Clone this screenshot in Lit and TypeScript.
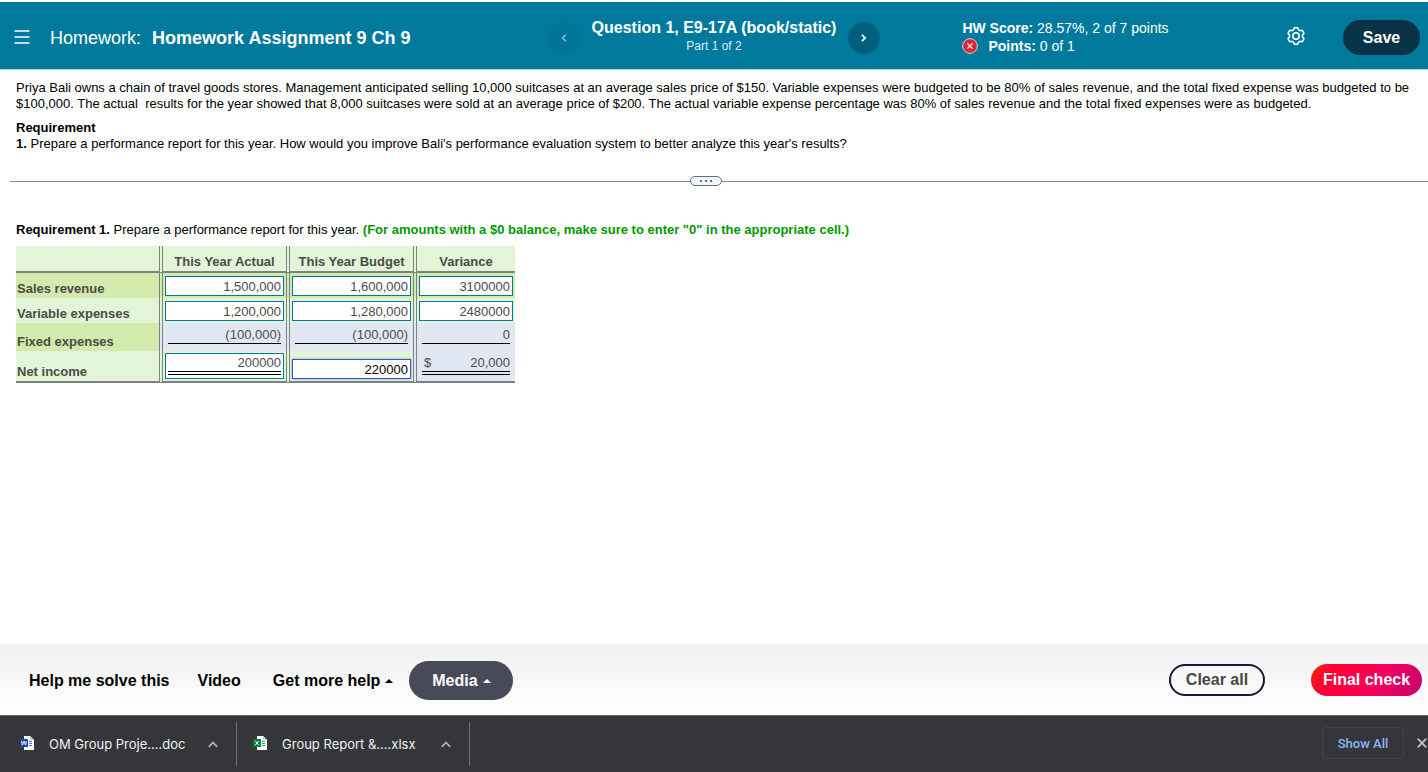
import { LitElement, html, css, svg, nothing } from "lit";
import { customElement, property } from "lit/decorators.js";
import { classMap } from "lit/directives/class-map.js";

type Kind = "input" | "ruled-input" | "active-input" | "subtotal" | "total";

interface Cell {
  kind: Kind;
  value: string;
  currency?: string;
}

interface Row {
  label: string;
  size: "short" | "medium" | "tall";
  dark: boolean;
  cells: Cell[];
}

const COLUMNS = ["This Year Actual", "This Year Budget", "Variance"];

const ROWS: Row[] = [
  {
    label: "Sales revenue",
    size: "short",
    dark: true,
    cells: [
      { kind: "input", value: "1,500,000" },
      { kind: "input", value: "1,600,000" },
      { kind: "input", value: "3100000" },
    ],
  },
  {
    label: "Variable expenses",
    size: "short",
    dark: false,
    cells: [
      { kind: "input", value: "1,200,000" },
      { kind: "input", value: "1,280,000" },
      { kind: "input", value: "2480000" },
    ],
  },
  {
    label: "Fixed expenses",
    size: "medium",
    dark: true,
    cells: [
      { kind: "subtotal", value: "(100,000)" },
      { kind: "subtotal", value: "(100,000)" },
      { kind: "subtotal", value: "0" },
    ],
  },
  {
    label: "Net income",
    size: "tall",
    dark: false,
    cells: [
      { kind: "ruled-input", value: "200000" },
      { kind: "active-input", value: "220000" },
      { kind: "total", value: "20,000", currency: "$" },
    ],
  },
];

const base = css`
  :host,
  * {
    box-sizing: border-box;
  }
  button,
  input {
    font-family: inherit;
    margin: 0;
  }
  button {
    border: 0;
    padding: 0;
    background: none;
    color: inherit;
    display: flex;
    align-items: center;
    justify-content: center;
    white-space: nowrap;
  }
  svg {
    display: block;
    flex: none;
  }
`;

@customElement("homework-header")
export class HomeworkHeader extends LitElement {
  static styles = [
    base,
    css`
      :host {
        display: block;
        flex: none;
      }
      .bar {
        display: grid;
        grid-template-columns: 1fr auto 1fr;
        align-items: center;
        height: 68px;
        background: #007a9c;
        border-bottom: 1px solid #b5d5e2;
        color: #fff;
      }
      .left {
        display: flex;
        align-items: center;
        gap: 20px;
        padding: 4px 0 0 14px;
      }
      .menu {
        padding-bottom: 2px;
      }
      h1 {
        margin: 0;
        font-size: 18px;
        line-height: 24px;
        font-weight: 400;
        white-space: nowrap;
      }
      h1 b {
        margin-left: 6px;
      }
      .nav {
        display: flex;
        align-items: center;
        gap: 12px;
        padding-top: 4px;
      }
      .round {
        width: 32px;
        height: 32px;
        border-radius: 16px;
        background: #005f7f;
      }
      .round.off {
        background: #007497;
        color: #8cc0d1;
      }
      .title {
        text-align: center;
        white-space: nowrap;
        padding-bottom: 4px;
      }
      .question {
        font-size: 16px;
        line-height: 20px;
        font-weight: 700;
      }
      .part {
        font-size: 12px;
        line-height: 16px;
        color: #d9ecf2;
      }
      .right {
        display: flex;
        align-items: center;
        padding: 4px 8px 0 82px;
      }
      .score {
        font-size: 14px;
        line-height: 18px;
        white-space: nowrap;
        margin-right: auto;
        padding-bottom: 2px;
      }
      .points {
        display: flex;
        align-items: center;
        gap: 10px;
      }
      .settings {
        padding-bottom: 4px;
      }
      .save {
        width: 77px;
        height: 35px;
        margin-left: 37px;
        border-radius: 18px;
        background: #0b3347;
        font-size: 16px;
        font-weight: 700;
      }
    `,
  ];

  render() {
    return html`
      <header class="bar">
        <div class="left">
          <button class="menu" aria-label="Menu">
            <svg width="16" height="14" viewBox="0 0 16 14" stroke="#fff" stroke-width="1.5">
              <path d="M.5 1h15M.5 7h15M.5 13h15" />
            </svg>
          </button>
          <h1>Homework: <b>Homework Assignment 9 Ch 9</b></h1>
        </div>
        <nav class="nav">
          <button class="round off" aria-label="Previous question">
            <svg width="6" height="8" viewBox="0 0 6 8" fill="none" stroke="currentColor" stroke-width="1.5">
              <path d="M4.8.8 1.500 4l3.300 3.200" />
            </svg>
          </button>
          <div class="title">
            <div class="question">Question 1, E9-17A (book/static)</div>
            <div class="part">Part 1 of 2</div>
          </div>
          <button class="round" aria-label="Next question">
            <svg width="6" height="8" viewBox="0 0 6 8" fill="none" stroke="currentColor" stroke-width="1.8">
              <path d="m1 .8 3.2 3.2L1 7.2" />
            </svg>
          </button>
        </nav>
        <div class="right">
          <div class="score">
            <div><b>HW Score:</b> 28.57%, 2 of 7 points</div>
            <div class="points">
              <svg width="16" height="16" viewBox="0 0 16 16">
                <circle cx="8" cy="8" r="7.3" fill="#db2437" stroke="#e9c9d0" stroke-width="1" />
                <path d="m5.4 5.4 5.2 5.2m0-5.2-5.2 5.2" stroke="#fff" stroke-width="1.3" />
              </svg>
              <span><b>Points:</b> 0 of 1</span>
            </div>
          </div>
          <button class="settings" aria-label="Settings">
            <svg width="20" height="20" viewBox="0 0 20 20" fill="none" stroke="#fff" stroke-width="1.5" stroke-linejoin="round">
              <path
                d="M8.300 1.700h3.400l.8 2.100 1.500.9 2.300-.4 1.700 3-1.500 1.800v1.800l1.500 1.800-1.700 3-2.300-.4-1.500.9-.8 2.100H8.300l-.8-2.100-1.500-.9-2.300.4-1.700-3 1.500-1.800V9.100L2 7.300l1.700-3 2.300.4 1.500-.9z"
              />
              <circle cx="10" cy="10" r="3.200" />
            </svg>
          </button>
          <button class="save">Save</button>
        </div>
      </header>
    `;
  }
}

@customElement("performance-table")
export class PerformanceTable extends LitElement {
  static styles = [
    base,
    css`
      :host {
        display: block;
      }
      table {
        table-layout: fixed;
        width: 499px;
        border-collapse: separate;
        border-spacing: 0;
        font-size: 13px;
        line-height: 16px;
        color: #4b4b4b;
      }
      .c-label {
        width: 143px;
      }
      .c-wide {
        width: 127px;
      }
      .c-last {
        width: 102px;
      }
      th,
      td {
        padding: 0;
      }
      thead th {
        height: 27px;
        padding-top: 6px;
        background: #e3f5d8;
        border-bottom: 2px solid #808080;
      }
      thead th + th,
      tbody td {
        border-left: 4px double #808080;
      }
      tbody th {
        text-align: left;
        vertical-align: bottom;
        padding: 0 0 1px 1px;
      }
      tbody td {
        vertical-align: bottom;
        padding: 0 2px 2px;
      }
      .short {
        height: 25px;
      }
      .medium {
        height: 28px;
      }
      .tall {
        height: 32px;
      }
      .tall th,
      .tall td {
        border-bottom: 2px solid #808080;
      }
      tr {
        background: #e3f5d8;
      }
      tr.dark {
        background: #d2eaac;
      }
      td.fixed {
        background: #e2e7f4;
        vertical-align: top;
        padding: 4px 5px 0;
      }
      .amount {
        display: flex;
        justify-content: space-between;
        border-bottom: 1px solid #000;
      }
      .amount b {
        font-weight: 400;
        margin-left: auto;
      }
      .amount.double {
        border-bottom: 4px double #000;
      }
      .amount i {
        font-style: normal;
        margin-left: 2px;
      }
      input {
        display: block;
        width: 100%;
        height: 20px;
        padding: 0 2px;
        border: 1px solid #007a9c;
        border-radius: 0;
        outline: 0;
        background: #fff;
        color: inherit;
        font-size: 13px;
        text-align: right;
      }
      .active {
        border-color: #2f55c8;
        box-shadow: 0 0 2px #6d8fe0;
        color: #000;
      }
      .frame {
        height: 26px;
        padding: 0 2px;
        border: 1px solid #007a9c;
        background: #fff;
      }
      .frame input {
        height: 21px;
        padding: 0;
        border: 0;
        border-bottom: 4px double #000;
      }
    `,
  ];

  private renderCell(cell: Cell, label: string) {
    if (cell.kind === "subtotal" || cell.kind === "total") {
      return html`<td class="fixed">
        <div class=${classMap({ amount: true, double: cell.kind === "total" })}>
          ${cell.currency ? html`<i>${cell.currency}</i>` : nothing}<b>${cell.value}</b>
        </div>
      </td>`;
    }
    if (cell.kind === "ruled-input") {
      return html`<td>
        <div class="frame"><input type="text" aria-label=${label} .value=${cell.value} /></div>
      </td>`;
    }
    return html`<td>
      <input
        type="text"
        class=${classMap({ active: cell.kind === "active-input" })}
        aria-label=${label}
        .value=${cell.value}
      />
    </td>`;
  }

  render() {
    return html`
      <table>
        <colgroup>
          <col class="c-label" />
          <col class="c-wide" />
          <col class="c-wide" />
          <col class="c-last" />
        </colgroup>
        <thead>
          <tr>
            <th></th>
            ${COLUMNS.map((name) => html`<th scope="col">${name}</th>`)}
          </tr>
        </thead>
        <tbody>
          ${ROWS.map(
            (row) => html`<tr class=${classMap({ [row.size]: true, dark: row.dark })}>
              <th scope="row">${row.label}</th>
              ${row.cells.map((cell, i) => this.renderCell(cell, `${row.label}, ${COLUMNS[i]}`))}
            </tr>`
          )}
        </tbody>
      </table>
    `;
  }
}

@customElement("help-bar")
export class HelpBar extends LitElement {
  static styles = [
    base,
    css`
      :host {
        display: block;
        flex: none;
      }
      .bar {
        display: flex;
        align-items: center;
        height: 71px;
        padding: 2px 6px 0 29px;
        background: linear-gradient(#f0f0f0, #fff);
      }
      button {
        font-size: 16px;
        line-height: 20px;
        font-weight: 700;
        color: #000;
        gap: 5px;
      }
      .video {
        margin-left: 28px;
      }
      .more {
        margin-left: 32px;
      }
      button.media {
        width: 104px;
        height: 39px;
        margin-left: 16px;
        border-radius: 20px;
        background: #484b57;
        color: #fff;
      }
      .actions {
        display: flex;
        gap: 46px;
        margin-left: auto;
        padding-bottom: 2px;
      }
      button.clear {
        width: 96px;
        height: 32px;
        border: 2px solid #151b33;
        border-radius: 16px;
        color: #484848;
      }
      button.final {
        width: 111px;
        height: 32px;
        border-radius: 16px;
        background: linear-gradient(120deg, #ff2a00 0%, #ff0030 18%, #f5005c 60%, #c4006e 100%);
        color: #fff;
      }
    `,
  ];

  private caret() {
    return html`<svg width="8" height="4" viewBox="0 0 8 4" fill="currentColor">
      ${svg`<path d="M4 0 8 4H0z" />`}
    </svg>`;
  }

  render() {
    return html`
      <footer class="bar">
        <button>Help me solve this</button>
        <button class="video">Video</button>
        <button class="more">Get more help ${this.caret()}</button>
        <button class="media">Media ${this.caret()}</button>
        <div class="actions">
          <button class="clear">Clear all</button>
          <button class="final">Final check</button>
        </div>
      </footer>
    `;
  }
}

@customElement("download-item")
export class DownloadItem extends LitElement {
  @property() name = "";
  @property() kind: "word" | "excel" = "word";

  static styles = [
    base,
    css`
      :host {
        display: flex;
        align-items: center;
        width: 233px;
        height: 44px;
        padding: 0 18px 0 16px;
        border-right: 1px solid #707174;
      }
      .name {
        flex: 1;
        margin-left: 14px;
        font-family: Inter, "Liberation Sans", sans-serif;
        font-size: 13px;
        line-height: 16px;
        color: #f1f1f2;
        white-space: nowrap;
      }
    `,
  ];

  private icon() {
    const word = this.kind === "word";
    const main = word ? "#2446a0" : "#0c8043";
    const lines = word ? "#2f7fe0" : "#27a567";
    return html`<svg width="15" height="16" viewBox="0 0 15 16">
      <path d="M4 0h6l4 4v10H4z" fill="#fff" />
      <path d="M10 0v4h4z" fill="#c9ccd2" />
      <path d="M9 5.500h3M9 7.500h3M9 9.500h3" stroke=${lines} />
      <path d="M0 3h8v8H0z" fill=${main} />
      ${word
        ? svg`<path d="m1.500 5 1 4 1.500-4 1.500 4 1-4" fill="none" stroke="#fff" stroke-width=".9" />`
        : svg`<path d="m2.300 5 3.400 4m0-4-3.400 4" stroke="#fff" />`}
    </svg>`;
  }

  render() {
    return html`
      ${this.icon()}
      <span class="name">${this.name}</span>
      <button aria-label="More actions">
        <svg width="10" height="7" viewBox="0 0 10 7" fill="none" stroke="#b4b5b8" stroke-width="1.700">
          <path d="m.8 5.800 4.200-4.300 4.200 4.300" />
        </svg>
      </button>
    `;
  }
}

@customElement("download-shelf")
export class DownloadShelf extends LitElement {
  static styles = [
    base,
    css`
      :host {
        display: block;
        flex: none;
      }
      .shelf {
        display: flex;
        align-items: center;
        height: 57px;
        padding: 0 1px 0 4px;
        border-top: 1px solid #626569;
        background: #35363a;
      }
      .end {
        display: flex;
        align-items: center;
        gap: 13px;
        margin-left: auto;
        padding-bottom: 2px;
      }
      .show {
        width: 82px;
        height: 32px;
        border: 1px solid #424347;
        border-radius: 4px;
        font-family: Roboto, sans-serif;
        font-size: 13px;
        font-weight: 500;
        color: #8ab4f8;
      }
    `,
  ];

  render() {
    return html`
      <section class="shelf">
        <download-item kind="word" name="OM Group Proje....doc"></download-item>
        <download-item kind="excel" name="Group Report &....xlsx"></download-item>
        <div class="end">
          <button class="show">Show All</button>
          <button aria-label="Close">
            <svg width="10" height="10" viewBox="0 0 10 10" stroke="#c3c4c6" stroke-width="1.800">
              <path d="m.7.7 8.600 8.600m0-8.600L.7 9.300" />
            </svg>
          </button>
        </div>
      </section>
    `;
  }
}

@customElement("app-root")
export class AppRoot extends LitElement {
  static styles = [
    base,
    css`
      :host {
        display: flex;
        flex-direction: column;
        min-height: 100vh;
        padding-top: 2px;
        background: #fff;
        font-family: "Liberation Sans", Arial, sans-serif;
      }
      main {
        flex: 1;
        font-size: 13px;
        line-height: 16px;
        color: #000;
      }
      .problem {
        padding: 10px 16px 0;
      }
      p {
        margin: 0 0 8px;
      }
      .splitter {
        display: flex;
        align-items: center;
        margin: 24px 0 36px 10px;
      }
      .splitter::before,
      .splitter::after {
        content: "";
        flex: 1;
        height: 1px;
        background: #7f8b99;
      }
      .splitter::before {
        flex: 680;
      }
      .splitter::after {
        flex: 706;
      }
      .handle {
        width: 32px;
        height: 10px;
        border: 1px solid #5f6f80;
        border-radius: 5px;
        background: #f3f6f8;
      }
      .answer {
        padding: 0 16px;
      }
      .note {
        color: #009a00;
      }
    `,
  ];

  render() {
    return html`
      <homework-header></homework-header>
      <main>
        <section class="problem">
          <p>
            Priya Bali owns a chain of travel goods stores. Management anticipated selling 10,000 suitcases at an
            average sales price of $150. Variable expenses were budgeted to be 80% of sales revenue, and the total
            fixed expense was budgeted to be $100,000. The actual&nbsp; results for the year showed that 8,000
            suitcases were sold at an average price of $200. The actual variable expense percentage was 80% of sales
            revenue and the total fixed expenses were as budgeted.
          </p>
          <p>
            <b>Requirement</b><br />
            <b>1.</b> Prepare a performance report for this year. How would you improve Bali's performance evaluation
            system to better analyze this year's results?
          </p>
        </section>
        <div class="splitter">
          <button class="handle" aria-label="Resize panels">
            <svg width="12" height="2" viewBox="0 0 12 2" fill="#5f6b78">
              <path d="M0 0h2v2H0zM5 0h2v2H5zM10 0h2v2h-2z" />
            </svg>
          </button>
        </div>
        <section class="answer">
          <p>
            <b>Requirement 1.</b> Prepare a performance report for this year.
            <b class="note">(For amounts with a $0 balance, make sure to enter "0" in the appropriate cell.)</b>
          </p>
          <performance-table></performance-table>
        </section>
      </main>
      <help-bar></help-bar>
      <download-shelf></download-shelf>
    `;
  }
}
